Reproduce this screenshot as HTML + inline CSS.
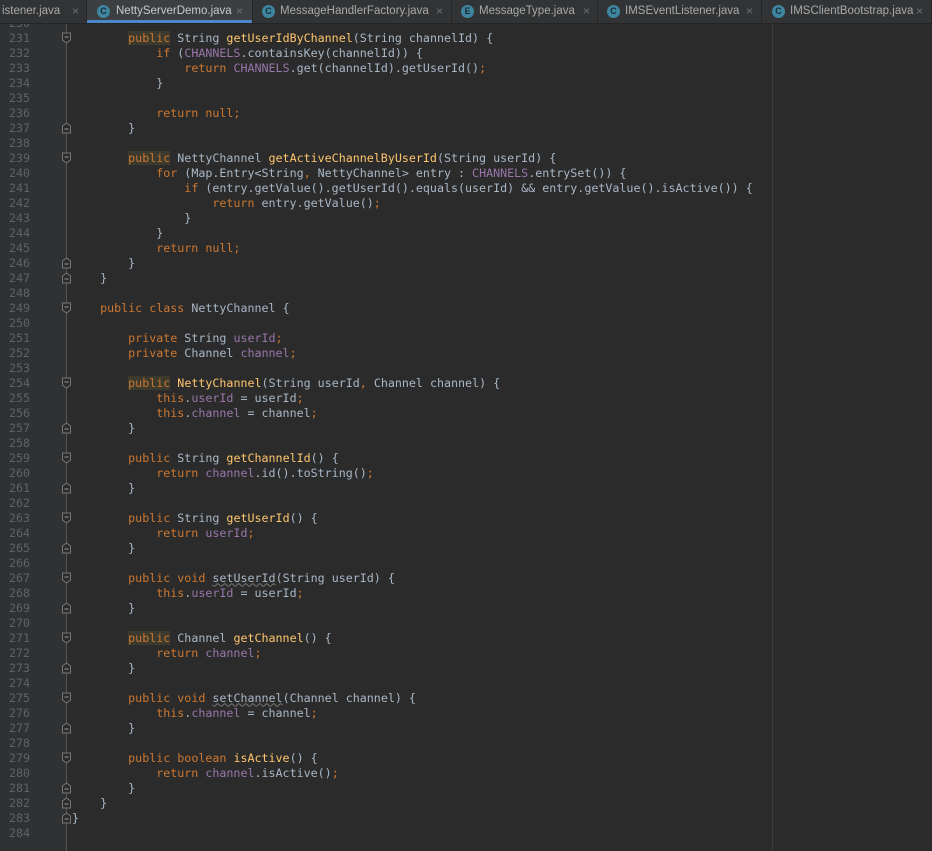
<!DOCTYPE html>
<html><head><meta charset="utf-8"><style>
body{margin:0;width:932px;height:851px;background:#2b2b2b;overflow:hidden;position:relative;font-family:"Liberation Mono",monospace}
#tabs{position:absolute;left:0;top:0;width:932px;height:23px;background:#313335;border-bottom:1px solid #242424;z-index:5;font-family:"Liberation Sans",sans-serif;font-size:11.5px;color:#a9a9a9}
.tab{position:absolute;top:0;height:23px;border-right:1px solid #262626;box-sizing:border-box;white-space:nowrap;line-height:23px}
.tab .ic{position:absolute;top:5px;width:13px;height:13px;border-radius:50%;background:#3e86a0;color:#1b2a33;font-size:9px;line-height:13px;text-align:center;font-weight:bold}
.tab .x{position:absolute;top:0;color:#6e6e6e;font-size:12px}
.act{background:#3c3f41;color:#c8c8c8}
.act:after{content:"";position:absolute;left:0;right:0;bottom:0;height:3px;background:#4a88c7}
#gut{position:absolute;left:0;top:0;width:66px;height:851px;background:#2f3133}
#fold{position:absolute;left:66px;top:0;width:1px;height:851px;background:#555}
#margin{position:absolute;left:772px;top:0;width:1px;height:851px;background:#3b3b3b}
#nums{position:absolute;left:0;top:15.5px;width:30px;text-align:right;font-size:11.67px;line-height:15px;color:#606366;margin:0}
#code{position:absolute;left:72px;top:15.5px;font-size:11.67px;line-height:15px;color:#a9b7c6;margin:0;white-space:pre}
.k{color:#cc7832}.f{color:#9876aa}.m{color:#ffc66d}.h{background:#3b3a2c}.u{color:#a9b7c6;text-decoration:underline wavy #777;text-decoration-thickness:1px}
</style></head><body>
<div id="gut"></div><div id="fold"></div><div id="margin"></div>
<div id="tabs">
<div class="tab" style="left:0;width:87px"><span style="position:absolute;left:2px">istener.java</span><span class="x" style="left:72px">×</span></div>
<div class="tab act" style="left:87px;width:166px"><span class="ic" style="left:10px">C</span><span style="position:absolute;left:29px">NettyServerDemo.java</span><span class="x" style="left:149px">×</span></div>
<div class="tab" style="left:253px;width:199px"><span class="ic" style="left:9px">C</span><span style="position:absolute;left:27px">MessageHandlerFactory.java</span><span class="x" style="left:183px">×</span></div>
<div class="tab" style="left:452px;width:146px"><span class="ic" style="left:9px">E</span><span style="position:absolute;left:27px">MessageType.java</span><span class="x" style="left:131px">×</span></div>
<div class="tab" style="left:598px;width:164px"><span class="ic" style="left:9px">C</span><span style="position:absolute;left:27px">IMSEventListener.java</span><span class="x" style="left:148px">×</span></div>
<div class="tab" style="left:762px;width:170px"><span class="ic" style="left:10px">C</span><span style="position:absolute;left:28px">IMSClientBootstrap.java</span><span class="x" style="left:154px">×</span></div>
</div>
<pre id="nums">230
231
232
233
234
235
236
237
238
239
240
241
242
243
244
245
246
247
248
249
250
251
252
253
254
255
256
257
258
259
260
261
262
263
264
265
266
267
268
269
270
271
272
273
274
275
276
277
278
279
280
281
282
283
284</pre>
<pre id="code">

        <span class="k h">public</span> String <span class="m">getUserIdByChannel</span>(String channelId) {
            <span class="k">if</span> (<span class="f">CHANNELS</span>.containsKey(channelId)) {
                <span class="k">return</span> <span class="f">CHANNELS</span>.get(channelId).getUserId()<span class="k">;</span>
            }

            <span class="k">return null;</span>
        }

        <span class="k h">public</span> NettyChannel <span class="m">getActiveChannelByUserId</span>(String userId) {
            <span class="k">for</span> (Map.Entry&lt;String<span class="k">,</span> NettyChannel&gt; entry : <span class="f">CHANNELS</span>.entrySet()) {
                <span class="k">if</span> (entry.getValue().getUserId().equals(userId) &amp;&amp; entry.getValue().isActive()) {
                    <span class="k">return</span> entry.getValue()<span class="k">;</span>
                }
            }
            <span class="k">return null;</span>
        }
    }

    <span class="k">public class</span> NettyChannel {

        <span class="k">private</span> String <span class="f">userId</span><span class="k">;</span>
        <span class="k">private</span> Channel <span class="f">channel</span><span class="k">;</span>

        <span class="k h">public</span> <span class="m">NettyChannel</span>(String userId<span class="k">,</span> Channel channel) {
            <span class="k">this</span>.<span class="f">userId</span> = userId<span class="k">;</span>
            <span class="k">this</span>.<span class="f">channel</span> = channel<span class="k">;</span>
        }

        <span class="k">public</span> String <span class="m">getChannelId</span>() {
            <span class="k">return</span> <span class="f">channel</span>.id().toString()<span class="k">;</span>
        }

        <span class="k">public</span> String <span class="m">getUserId</span>() {
            <span class="k">return</span> <span class="f">userId</span><span class="k">;</span>
        }

        <span class="k">public void</span> <span class="u">setUserId</span>(String userId) {
            <span class="k">this</span>.<span class="f">userId</span> = userId<span class="k">;</span>
        }

        <span class="k h">public</span> Channel <span class="m">getChannel</span>() {
            <span class="k">return</span> <span class="f">channel</span><span class="k">;</span>
        }

        <span class="k">public void</span> <span class="u">setChannel</span>(Channel channel) {
            <span class="k">this</span>.<span class="f">channel</span> = channel<span class="k">;</span>
        }

        <span class="k">public boolean</span> <span class="m">isActive</span>() {
            <span class="k">return</span> <span class="f">channel</span>.isActive()<span class="k">;</span>
        }
    }
}
</pre>
<svg width="932" height="851" style="position:absolute;left:0;top:0" id="fm"></svg>
<script>
var o=[231,239,249,254,259,263,267,271,275,279],c=[237,246,247,257,261,265,269,273,277,281,282,283],s="";
o.forEach(function(n){var y=38+(n-231)*15;s+='<path d="M62.5 '+(y-5)+'h8v7l-4 3l-4 -3z" fill="#2b2b2b" stroke="#777"/><path d="M64.5 '+(y-1)+'h4" stroke="#999"/>';});
c.forEach(function(n){var y=38+(n-231)*15;s+='<path d="M62.5 '+(y+5)+'h8v-7l-4 -3l-4 3z" fill="#2b2b2b" stroke="#777"/><path d="M64.5 '+(y+1)+'h4" stroke="#999"/>';});
document.getElementById('fm').innerHTML=s;
</script>
</body></html>
